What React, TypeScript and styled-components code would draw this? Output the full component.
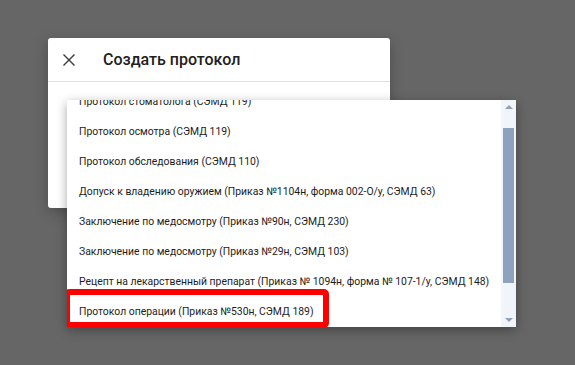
import React from 'react'
import styled, {createGlobalStyle} from 'styled-components'

const GlobalStyle = createGlobalStyle`
  html, body {
    margin: 0;
    padding: 0;
    background: #666666;
  }
  body {
    font-family: Roboto, "Liberation Sans", Arial, sans-serif;
    color: #212121;
  }
`

const PROTOCOLS = [
  'Протокол стоматолога (СЭМД 119)',
  'Протокол осмотра (СЭМД 119)',
  'Протокол обследования (СЭМД 110)',
  'Допуск к владению оружием (Приказ №1104н, форма 002-О/у, СЭМД 63)',
  'Заключение по медосмотру (Приказ №90н, СЭМД 230)',
  'Заключение по медосмотру (Приказ №29н, СЭМД 103)',
  'Рецепт на лекарственный препарат (Приказ № 1094н, форма № 107-1/у, СЭМД 148)',
  'Протокол операции (Приказ №530н, СЭМД 189)',
]

const HIGHLIGHTED = 7

export default function App() {
  return (
    <>
      <GlobalStyle />
      <Backdrop>
        <Dialog>
          <DialogHeader>
            <CloseButton aria-label="close">
              <svg width="12" height="12" viewBox="0 0 12 12">
                <path d="M0.5 0.5 L11.5 11.5 M11.5 0.5 L0.5 11.5" stroke="#3a3a3a" strokeWidth="1.4" fill="none" />
              </svg>
            </CloseButton>
            <Title>Создать протокол</Title>
          </DialogHeader>
        </Dialog>

        <Menu>
          <ListViewport>
            <List>
              {PROTOCOLS.map((name, index) => (
                <Item key={index} $highlighted={index === HIGHLIGHTED}>
                  {name}
                </Item>
              ))}
            </List>
          </ListViewport>
          <Scrollbar>
            <Arrow $dir="up" />
            <Track>
              <Thumb />
            </Track>
            <Arrow $dir="down" />
          </Scrollbar>
        </Menu>
      </Backdrop>
    </>
  )
}

const Backdrop = styled.div`
  position: relative;
  width: 575px;
  height: 365px;
  overflow: hidden;
  background: #666666;
`

const Dialog = styled.div`
  position: absolute;
  left: 48px;
  top: 38px;
  width: 342px;
  height: 170px;
  background: #ffffff;
  border-radius: 3px;
  box-shadow: 0 4px 14px rgba(0, 0, 0, 0.25);
`

const DialogHeader = styled.div`
  display: flex;
  align-items: center;
  height: 43px;
  padding-left: 15px;
  border-bottom: 1px solid #e0e0e0;
`

const CloseButton = styled.div`
  display: flex;
  width: 12px;
  height: 12px;
  margin-top: 1px;
  margin-right: 28px;
`

const Title = styled.h2`
  margin: 0;
  font-size: 16px;
  font-weight: 500;
  color: #212121;
`

const Menu = styled.div`
  position: absolute;
  left: 67px;
  top: 100px;
  width: 449px;
  height: 227px;
  display: flex;
  background: #ffffff;
  box-shadow: 0 3px 10px rgba(0, 0, 0, 0.35);
`

const ListViewport = styled.div`
  flex: 1;
  overflow: hidden;
`

const List = styled.ul`
  list-style: none;
  margin: -14px 0 0;
  padding: 0;
`

const Item = styled.li<{$highlighted?: boolean}>`
  position: relative;
  display: flex;
  align-items: center;
  height: 30px;
  padding-left: 12px;
  font-size: 10.4px;
  color: #1c1c1c;
  white-space: nowrap;

  &::after {
    content: '';
    display: ${(p) => (p.$highlighted ? 'block' : 'none')};
    position: absolute;
    left: -3px;
    top: -7px;
    width: 253px;
    height: 27px;
    border: 6px solid #ff0000;
    border-radius: 5px;
  }
`

const Scrollbar = styled.div`
  display: flex;
  flex-direction: column;
  align-items: center;
  width: 15px;
  background: #f1f4f9;
`

const Arrow = styled.div<{$dir: 'up' | 'down'}>`
  width: 0;
  height: 0;
  margin: ${(p) => (p.$dir === 'up' ? '5px 0 0' : '0 0 5px')};
  border-left: 4px solid transparent;
  border-right: 4px solid transparent;
  ${(p) =>
    p.$dir === 'up'
      ? 'border-bottom: 4px solid #8da1bb;'
      : 'border-top: 4px solid #8da1bb;'}
`

const Track = styled.div`
  flex: 1;
  width: 100%;
  padding: 19px 2px 35px;
  box-sizing: border-box;
  display: flex;
`

const Thumb = styled.div`
  flex: 1;
  background: #8da2bd;
`
